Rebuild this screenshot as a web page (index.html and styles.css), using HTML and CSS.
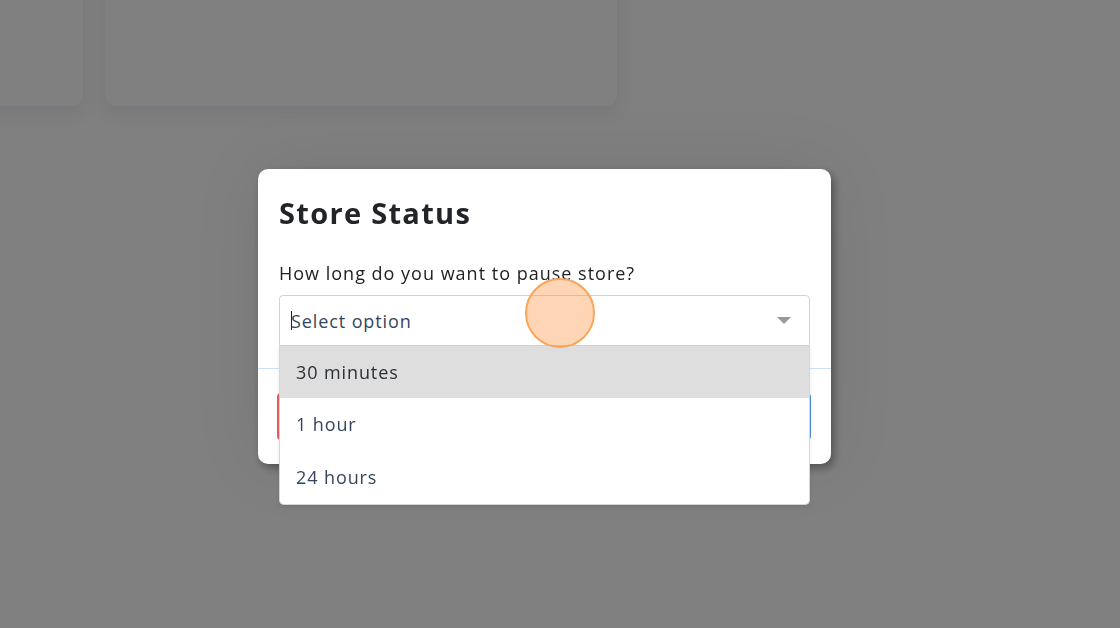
FILE: index.html
```html
<!DOCTYPE html>
<html>
<head>
<meta charset="utf-8">
<link rel="stylesheet" href="styles.css">
</head>
<body>
<div class="page">
  <div class="cards">
    <div class="card card-left"></div>
    <div class="card card-main"></div>
  </div>
</div>
<div class="overlay">
  <div class="modal">
    <h2 class="modal-title">Store Status</h2>
    <label class="field-label">How long do you want to pause store?</label>
    <div class="select-wrap">
      <div class="select">
        <span class="caret"></span><span class="placeholder">Select option</span>
        <svg class="arrow" width="14" height="7" viewBox="0 0 14 7"><path d="M0 0 H14 L7 7 Z" fill="#9a9a9a"/></svg>
      </div>
      <ul class="options">
        <li class="option active">30 minutes</li>
        <li class="option">1 hour</li>
        <li class="option">24 hours</li>
      </ul>
    </div>
    <div class="footer">
      <button class="btn btn-cancel" aria-label="Cancel"></button>
      <button class="btn btn-confirm" aria-label="Confirm"></button>
    </div>
  </div>
  <div class="click-marker"></div>
</div>
</body>
</html>
```
FILE: styles.css
```css
* { box-sizing: border-box; }
html, body { margin: 0; padding: 0; }
body {
  width: 1120px;
  height: 628px;
  overflow: hidden;
  background: #808080;
  font-family: "Open Sans", "DejaVu Sans", sans-serif;
}
.cards {
  display: flex;
  gap: 22px;
  margin-top: -20px;
  margin-left: -430px;
}
.card {
  height: 126px;
  background: #808080;
  border-radius: 10px;
  box-shadow: 0 6px 18px rgba(40, 50, 80, 0.12);
}
.card-left { width: 513px; }
.card-main { width: 512px; }

.overlay {
  position: fixed;
  inset: 0;
}
.modal {
  position: absolute;
  left: 258px;
  top: 169px;
  width: 573px;
  height: 295px;
  background: #fff;
  border-radius: 10px;
  padding: 24px 21px 0 21px;
  box-shadow: 3px 4px 8px rgba(0,0,0,0.35), 0 0 70px rgba(0,0,0,0.08);
}
.modal-title {
  margin: 0;
  font-size: 29px;
  font-weight: 700;
  letter-spacing: 1.3px;
  line-height: 40px;
  color: #222428;
}
.field-label {
  display: block;
  margin-top: 28px;
  font-size: 18px;
  letter-spacing: 1px;
  line-height: 24px;
  color: #222;
}
.select-wrap {
  position: relative;
  margin-top: 10px;
  z-index: 2;
}
.select {
  height: 51px;
  border: 1px solid #cfd2d6;
  border-radius: 4px 4px 0 0;
  display: flex;
  align-items: center;
  padding: 0 18px 0 11px;
  background: #fff;
}
.caret {
  width: 1px;
  height: 19px;
  background: #222;
  margin-right: -1px;
}
.placeholder {
  font-size: 18px;
  letter-spacing: 0.9px;
  color: #34465c;
  flex: 1;
}
.arrow { display: block; }
.options {
  position: absolute;
  left: 0;
  right: 0;
  top: 51px;
  margin: 0;
  padding: 0;
  list-style: none;
  background: #fff;
  border: 1px solid #d4d6da;
  border-top: none;
  border-radius: 0 0 5px 5px;
  box-shadow: 0 2px 4px rgba(0,0,0,0.08);
}
.option {
  height: 52px;
  display: flex;
  align-items: center;
  padding-left: 16px;
  font-size: 18px;
  letter-spacing: 0.9px;
  color: #34465c;
}
.option:last-child { height: 54px; }
.option.active {
  background: #dedede;
  color: #2b2f36;
}
.footer {
  position: absolute;
  left: 0;
  right: 0;
  top: 199px;
  border-top: 1px solid #cde0f7;
  display: flex;
  justify-content: space-between;
  padding: 24px 20px 0 19px;
}
.btn {
  height: 47px;
  width: 150px;
  background: #fff;
  border-radius: 4px;
  font-family: inherit;
  font-size: 16px;
}
.btn-cancel { border: 2px solid #e06262; }
.btn-confirm { border: 2px solid #4a90e2; }

.click-marker {
  position: absolute;
  left: 525px;
  top: 278px;
  width: 70px;
  height: 70px;
  border-radius: 50%;
  background: rgba(253, 150, 70, 0.4);
  border: 2px solid #f9a55a;
  z-index: 5;
}
```
